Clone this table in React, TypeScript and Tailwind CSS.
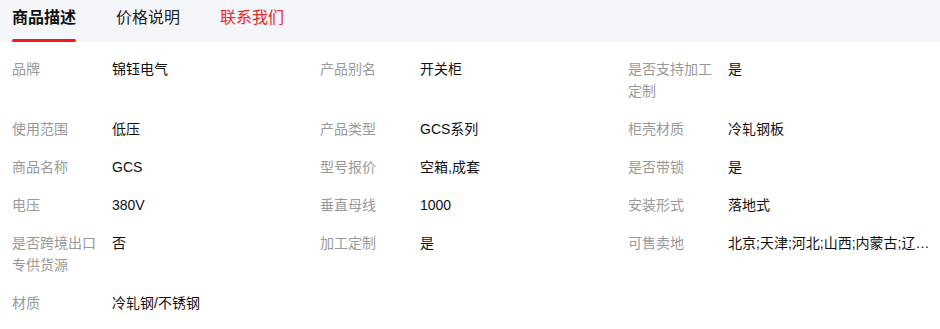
import React from 'react';

type Attr = { label: string; value: string };

const attrs: Attr[] = [
  { label: '品牌', value: '锦钰电气' },
  { label: '产品别名', value: '开关柜' },
  { label: '是否支持加工定制', value: '是' },
  { label: '使用范围', value: '低压' },
  { label: '产品类型', value: 'GCS系列' },
  { label: '柜壳材质', value: '冷轧钢板' },
  { label: '商品名称', value: 'GCS' },
  { label: '型号报价', value: '空箱,成套' },
  { label: '是否带锁', value: '是' },
  { label: '电压', value: '380V' },
  { label: '垂直母线', value: '1000' },
  { label: '安装形式', value: '落地式' },
  { label: '是否跨境出口专供货源', value: '否' },
  { label: '加工定制', value: '是' },
  { label: '可售卖地', value: '北京;天津;河北;山西;内蒙古;辽宁;吉林;黑龙江;上海;江苏;浙江' },
  { label: '材质', value: '冷轧钢/不锈钢' },
];

const tabs = ['商品描述', '价格说明', '联系我们'];

export default function App() {
  return (
    <div className="w-[940px] h-[329px] bg-white font-['Liberation_Sans','Noto_Sans_CJK_SC',sans-serif] overflow-hidden">
      <div className="h-[42px] bg-[#f5f6f9] flex items-stretch pl-3 gap-10">
        {tabs.map((t, i) => (
          <div key={t} className="relative flex items-center pb-[6px]">
            <span
              className={
                i === 0
                  ? 'text-[16px] font-bold text-[#111]'
                  : i === 2
                  ? 'text-[16px] text-[#e8262b]'
                  : 'text-[16px] text-[#222]'
              }
            >
              {t}
            </span>
            {i === 0 && (
              <div className="absolute left-0 right-0 bottom-0 h-[3px] rounded-full bg-[#f01c1f]" />
            )}
          </div>
        ))}
      </div>

      <div className="grid grid-cols-[308px_308px_308px] gap-y-4 pt-4 pl-3 text-[14px] leading-[22px]">
        {attrs.map((a) => (
          <div key={a.label} className="flex">
            <div className="w-[100px] shrink-0 pr-3 text-[#999]">{a.label}</div>
            <div className="min-w-0 flex-1 truncate text-[#111]">{a.value}</div>
          </div>
        ))}
      </div>
    </div>
  );
}
